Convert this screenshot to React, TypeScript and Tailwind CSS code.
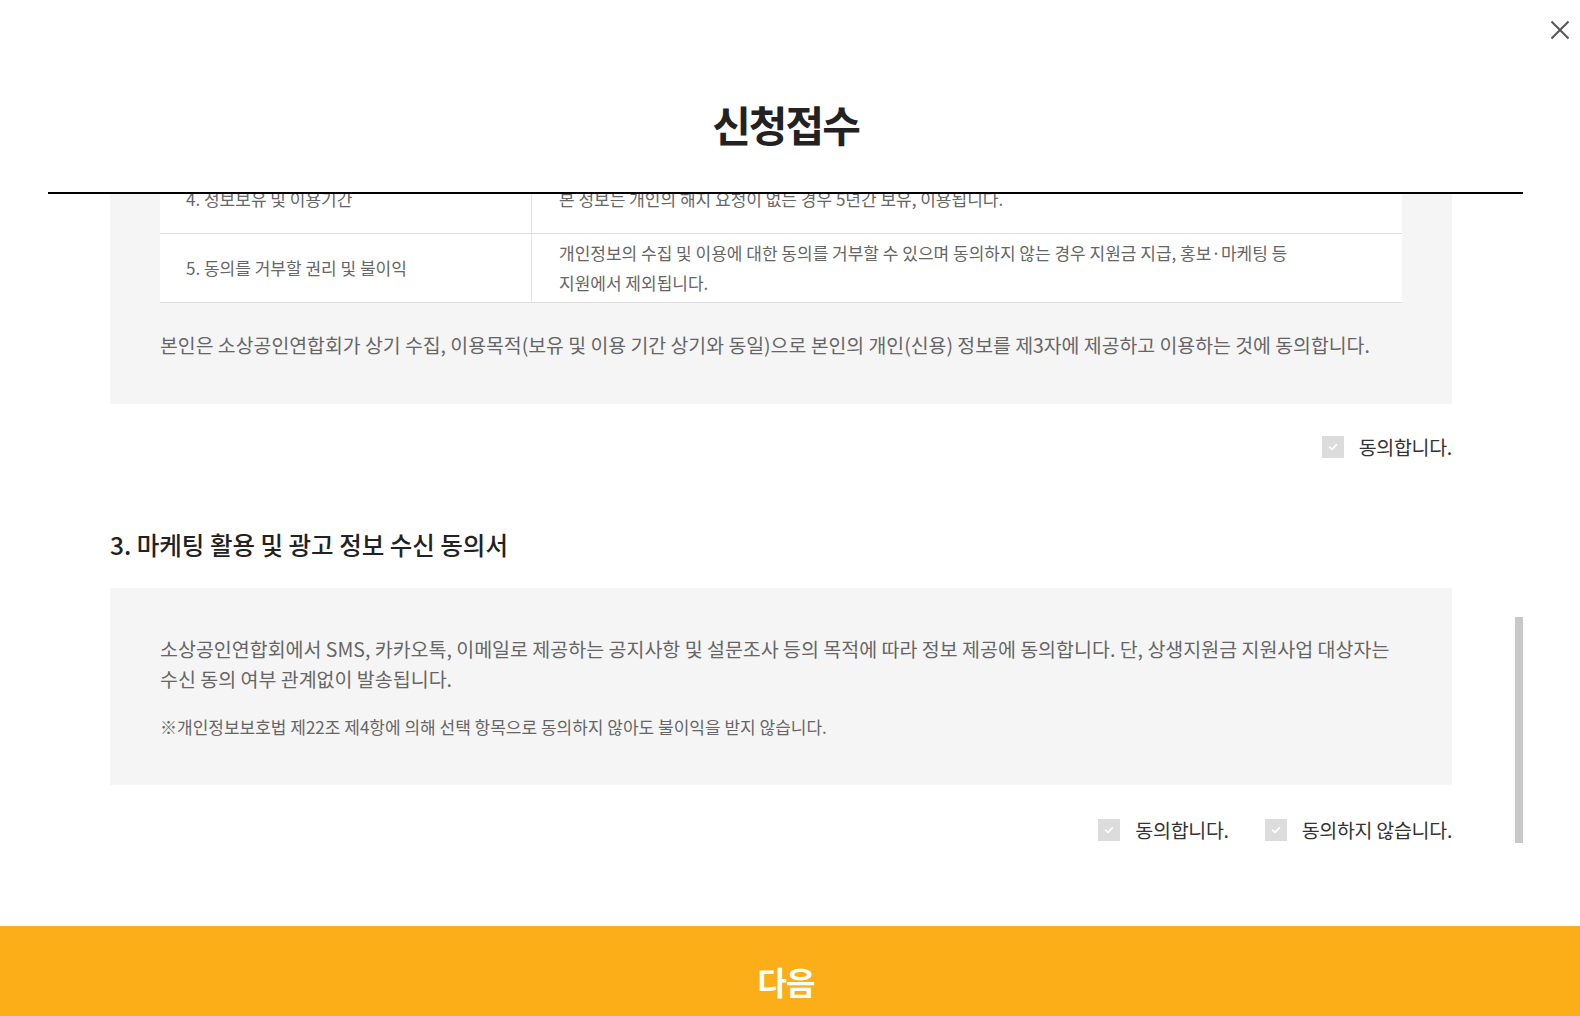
import React from "react";

const font = { fontFamily: '"Noto Sans CJK KR", "Noto Sans", sans-serif' };

function Check() {
  return (
    <span className="flex h-[22px] w-[22px] shrink-0 items-center justify-center bg-[#dcdcdc]">
      <svg width="10" height="8" viewBox="0 0 10 8" fill="none">
        <path d="M1.5 4.2 L4 6.4 L8.5 1.6" stroke="#ffffff" strokeWidth="1.6" strokeLinecap="round" strokeLinejoin="round" />
      </svg>
    </span>
  );
}

function CheckLabel({ label }: { label: string }) {
  return (
    <label className="flex h-[23px] items-center gap-[15px]">
      <Check />
      <span className="text-[19.5px] leading-[23px] tracking-[-0.3px] text-[#333]">{label}</span>
    </label>
  );
}

export default function App() {
  return (
    <div className="relative flex h-[1016px] w-[1580px] flex-col overflow-hidden bg-white" style={font}>
      <button className="absolute right-[10px] top-[20px] flex h-[20px] w-[20px] items-center justify-center" aria-label="닫기">
        <svg width="20" height="20" viewBox="0 0 20 20" fill="none">
          <path d="M1.5 1.5 L18.5 18.5 M18.5 1.5 L1.5 18.5" stroke="#555" strokeWidth="2" />
        </svg>
      </button>

      <div className="ml-[48px] flex w-[1475px] shrink-0 flex-col">
        <header className="h-[194px] border-b-2 border-black pt-[99px] text-center">
          <h1 className="text-[42px] font-bold leading-[50px] tracking-[-2px] text-[#222]">신청접수</h1>
        </header>

        <div className="relative flex h-[649px] flex-col justify-end overflow-hidden pb-[2px] pl-[62px] pr-[71px]">
          <div className="bg-[#f5f5f5] px-[50px] pb-[44px] pt-[40px]">
            <div className="bg-white text-[17px] leading-[30px] text-[#666]">
              <div className="flex h-[69px] border-b border-[#dddddd]">
                <div className="flex w-[372px] items-center border-r border-[#e5e5e5] pl-[26px]">4. 정보보유 및 이용기간</div>
                <div className="flex flex-1 items-center pl-[27px]">본 정보는 개인의 해지 요청이 없는 경우 5년간 보유, 이용됩니다.</div>
              </div>
              <div className="flex h-[69px] border-b border-[#dddddd]">
                <div className="flex w-[372px] items-center border-r border-[#e5e5e5] pl-[26px]">5. 동의를 거부할 권리 및 불이익</div>
                <div className="flex flex-1 items-center whitespace-nowrap pl-[27px]">
                  개인정보의 수집 및 이용에 대한 동의를 거부할 수 있으며 동의하지 않는 경우 지원금 지급, 홍보·마케팅 등
                  <br />
                  지원에서 제외됩니다.
                </div>
              </div>
            </div>
            <p className="mt-[27px] text-[19.4px] leading-[30px] text-[#666]">
              본인은 소상공인연합회가 상기 수집, 이용목적(보유 및 이용 기간 상기와 동일)으로 본인의 개인(신용) 정보를 제3자에 제공하고 이용하는 것에 동의합니다.
            </p>
          </div>

          <div className="mt-[31px] flex justify-end">
            <CheckLabel label="동의합니다." />
          </div>

          <h2 className="mt-[72px] text-[24.5px] font-medium leading-[30px] text-[#222]">
            3. 마케팅 활용 및 광고 정보 수신 동의서
          </h2>

          <div className="mt-[28px] bg-[#f5f5f5] px-[50px] pb-[43px] pt-[46px] text-[#666]">
            <p className="whitespace-nowrap text-[19.5px] leading-[30px]">
              소상공인연합회에서 SMS, 카카오톡, 이메일로 제공하는 공지사항 및 설문조사 등의 목적에 따라 정보 제공에 동의합니다. 단, 상생지원금 지원사업 대상자는
              <br />
              수신 동의 여부 관계없이 발송됩니다.
            </p>
            <p className="mt-[18px] text-[17px] leading-[30px]">
              ※개인정보보호법 제22조 제4항에 의해 선택 항목으로 동의하지 않아도 불이익을 받지 않습니다.
            </p>
          </div>

          <div className="mt-[33px] flex justify-end gap-[36px]">
            <CheckLabel label="동의합니다." />
            <CheckLabel label="동의하지 않습니다." />
          </div>

          <div className="absolute right-0 top-[423px] h-[226px] w-[8px] bg-[#c8c8c8]" />
        </div>
      </div>

      <div className="h-[83px] shrink-0" />

      <button className="flex h-[110px] w-full shrink-0 items-center justify-center bg-[#fbae17] pr-[8px] text-[32px] font-bold tracking-[-1px] text-white">
        다음
      </button>
    </div>
  );
}
